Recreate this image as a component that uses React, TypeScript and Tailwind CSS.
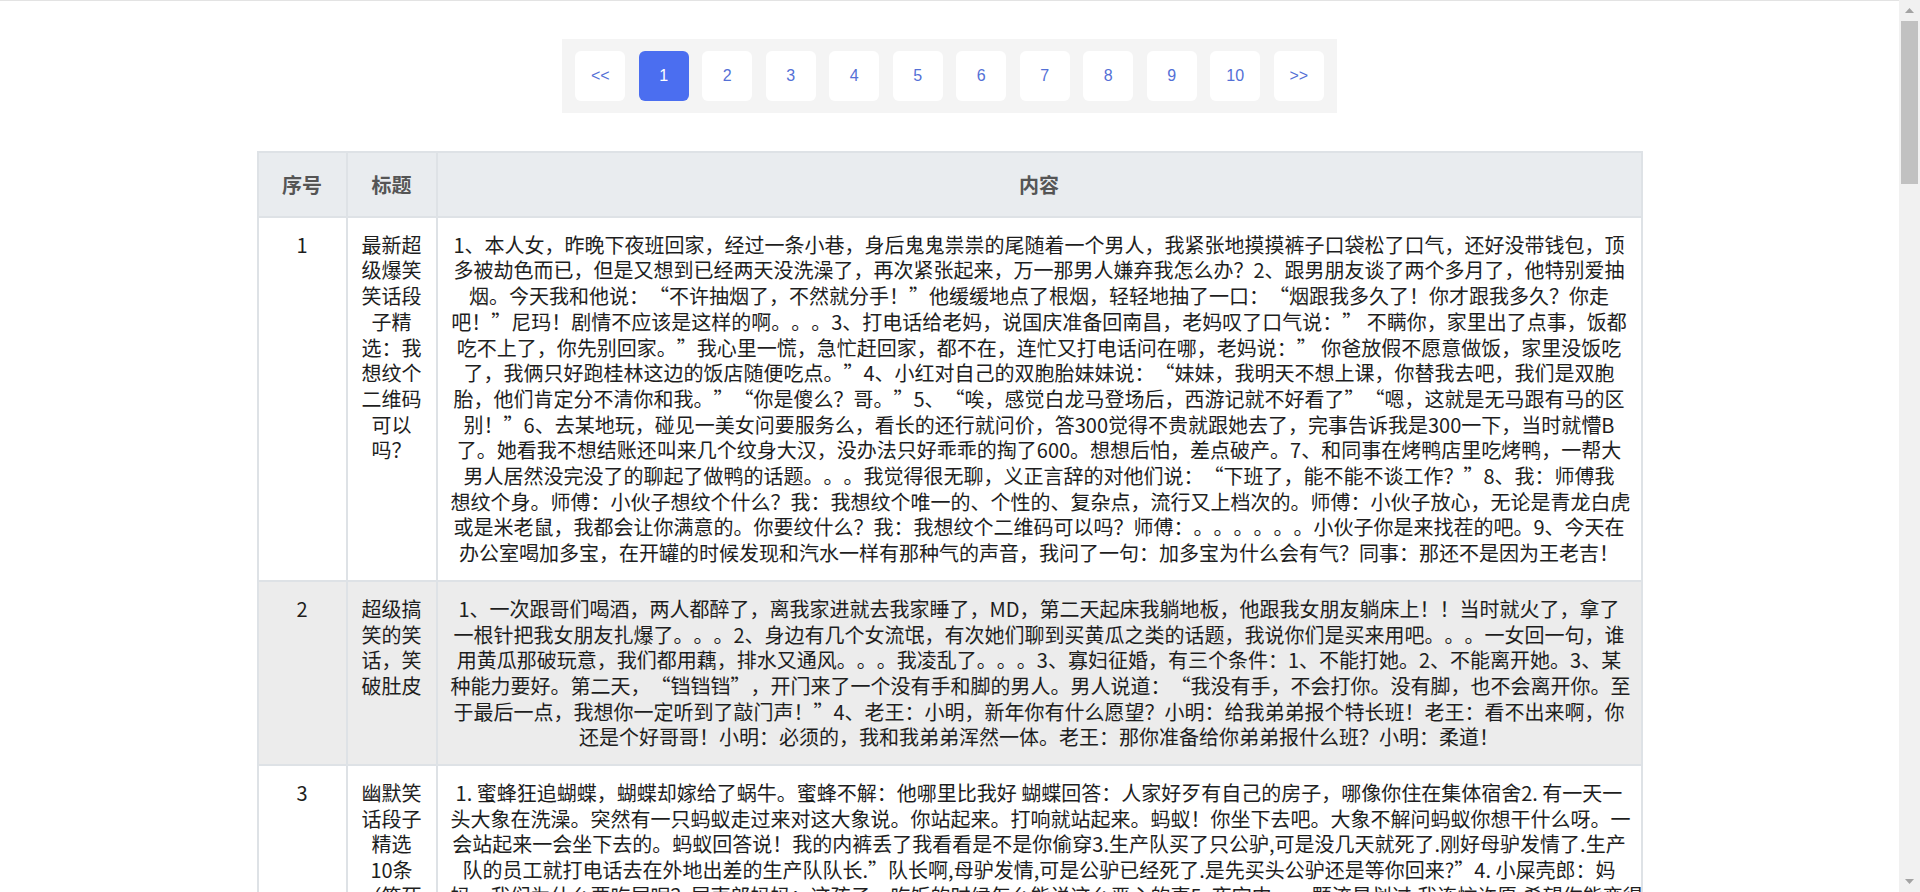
import React from "react";

const pages = ["<<", "1", "2", "3", "4", "5", "6", "7", "8", "9", "10", ">>"];

type Row = { no: string; title: string; lines: string[]; striped?: boolean };

const rows: Row[] = [
  {
    no: "1",
    title: "最新超级爆笑笑话段子精选：我想纹个二维码可以吗？",
    lines: [
      "1、本人女，昨晚下夜班回家，经过一条小巷，身后鬼鬼祟祟的尾随着一个男人，我紧张地摸摸裤子口袋松了口气，还好没带钱包，顶",
      "多被劫色而已，但是又想到已经两天没洗澡了，再次紧张起来，万一那男人嫌弃我怎么办？2、跟男朋友谈了两个多月了，他特别爱抽",
      "烟。今天我和他说：“不许抽烟了，不然就分手！”他缓缓地点了根烟，轻轻地抽了一口：“烟跟我多久了！你才跟我多久？你走",
      "吧！”尼玛！剧情不应该是这样的啊。。。3、打电话给老妈，说国庆准备回南昌，老妈叹了口气说：” 不瞒你，家里出了点事，饭都",
      "吃不上了，你先别回家。”我心里一慌，急忙赶回家，都不在，连忙又打电话问在哪，老妈说：” 你爸放假不愿意做饭，家里没饭吃",
      "了，我俩只好跑桂林这边的饭店随便吃点。”4、小红对自己的双胞胎妹妹说：“妹妹，我明天不想上课，你替我去吧，我们是双胞",
      "胎，他们肯定分不清你和我。”“你是傻么？哥。”5、“唉，感觉白龙马登场后，西游记就不好看了”“嗯，这就是无马跟有马的区",
      "别！”6、去某地玩，碰见一美女问要服务么，看长的还行就问价，答300觉得不贵就跟她去了，完事告诉我是300一下，当时就懵B",
      "了。她看我不想结账还叫来几个纹身大汉，没办法只好乖乖的掏了600。想想后怕，差点破产。7、和同事在烤鸭店里吃烤鸭，一帮大",
      "男人居然没完没了的聊起了做鸭的话题。。。我觉得很无聊，义正言辞的对他们说：“下班了，能不能不谈工作？”8、我：师傅我",
      "想纹个身。师傅：小伙子想纹个什么？我：我想纹个唯一的、个性的、复杂点，流行又上档次的。师傅：小伙子放心，无论是青龙白虎",
      "或是米老鼠，我都会让你满意的。你要纹什么？我：我想纹个二维码可以吗？师傅：。。。。。。小伙子你是来找茬的吧。9、今天在",
      "办公室喝加多宝，在开罐的时候发现和汽水一样有那种气的声音，我问了一句：加多宝为什么会有气？同事：那还不是因为王老吉！",
    ],
  },
  {
    no: "2",
    title: "超级搞笑的笑话，笑破肚皮",
    striped: true,
    lines: [
      "1、一次跟哥们喝酒，两人都醉了，离我家进就去我家睡了，MD，第二天起床我躺地板，他跟我女朋友躺床上！！当时就火了，拿了",
      "一根针把我女朋友扎爆了。。。2、身边有几个女流氓，有次她们聊到买黄瓜之类的话题，我说你们是买来用吧。。。一女回一句，谁",
      "用黄瓜那破玩意，我们都用藕，排水又通风。。。我凌乱了。。。3、寡妇征婚，有三个条件：1、不能打她。2、不能离开她。3、某",
      "种能力要好。第二天，“铛铛铛”，开门来了一个没有手和脚的男人。男人说道：“我没有手，不会打你。没有脚，也不会离开你。至",
      "于最后一点，我想你一定听到了敲门声！”4、老王：小明，新年你有什么愿望？小明：给我弟弟报个特长班！老王：看不出来啊，你",
      "还是个好哥哥！小明：必须的，我和我弟弟浑然一体。老王：那你准备给你弟弟报什么班？小明：柔道！",
    ],
  },
  {
    no: "3",
    title: "幽默笑话段子精选10条（笑死人不偿命）",
    lines: [
      "1. 蜜蜂狂追蝴蝶，蝴蝶却嫁给了蜗牛。蜜蜂不解：他哪里比我好 蝴蝶回答：人家好歹有自己的房子，哪像你住在集体宿舍2. 有一天一",
      "头大象在洗澡。突然有一只蚂蚁走过来对这大象说。你站起来。打响就站起来。蚂蚁！你坐下去吧。大象不解问蚂蚁你想干什么呀。一",
      "会站起来一会坐下去的。蚂蚁回答说！我的内裤丢了我看看是不是你偷穿3.生产队买了只公驴,可是没几天就死了.刚好母驴发情了.生产",
      "队的员工就打电话去在外地出差的生产队队长.”队长啊,母驴发情,可是公驴已经死了.是先买头公驴还是等你回来?”4. 小屎壳郎：妈",
      "妈，我们为什么要吃屎呢？屎壳郎妈妈：这孩子，吃饭的时候怎么能说这么恶心的事5. 夜空中，一颗流星划过,我连忙许愿,希望你能变得",
      "聪明一点，流星听了以后，想了想，又飞回去了。6. 老师：小明，你为什么上课睡觉？小明：因为我昨晚做梦梦见在上课。老师：",
      "那你现在睡觉又梦见什么了？小明：梦见下课了。7. 儿子问爸爸：爸爸，你小时候也挨打吗？爸爸说：是啊，被你爷爷打的。",
    ],
  },
];

export default function App() {
  return (
    <div
      className="flex h-screen w-full overflow-hidden bg-white"
      style={{ fontFamily: '"Noto Sans CJK SC", "Noto Sans", sans-serif' }}
    >
      <main className="min-w-0 flex-1 overflow-hidden border-t border-[#e3e3e3]">
        <nav className="mx-auto mt-[38px] flex w-fit gap-[13.5px] bg-[#f4f4f4] px-[13px] py-[12px]">
          {pages.map((p) => (
            <div
              key={p}
              className={
                p === "1"
                  ? "flex h-[50px] w-[50px] items-center justify-center rounded-[6px] bg-[#4b6ef0] text-[16px] text-white"
                  : "flex h-[50px] w-[50px] items-center justify-center rounded-[6px] bg-white text-[16px] text-[#5470d6]"
              }
              style={{ fontFamily: '"Liberation Sans", Arial, sans-serif' }}
            >
              {p}
            </div>
          ))}
        </nav>

        <table className="mx-auto mt-[38px] w-[1386px] table-fixed border-collapse text-[20px] leading-[25.7px] text-[#1e1e1e] [text-spacing-trim:space-all]">
          <colgroup>
            <col className="w-[89px]" />
            <col className="w-[90px]" />
            <col />
          </colgroup>
          <thead>
            <tr className="bg-[#e9ecef]">
              <th className="border-2 border-[#dee2e6] px-[13px] py-[18.5px] text-center align-middle font-bold text-[#555]">
                序号
              </th>
              <th className="border-2 border-[#dee2e6] px-[13px] py-[18.5px] text-center align-middle font-bold text-[#555]">
                标题
              </th>
              <th className="border-2 border-[#dee2e6] px-[13px] py-[18.5px] text-center align-middle font-bold text-[#555]">
                内容
              </th>
            </tr>
          </thead>
          <tbody>
            {rows.map((r) => (
              <tr key={r.no} className={r.striped ? "bg-[#ececec]" : "bg-white"}>
                <td className="border-2 border-[#dee2e6] px-[13px] py-[14px] text-center align-top">{r.no}</td>
                <td className="border-2 border-[#dee2e6] px-[13px] py-[14px] text-center align-top">{r.title}</td>
                <td className="whitespace-nowrap border-2 border-[#dee2e6] px-[13px] py-[14px] text-center align-top">
                  {r.lines.map((l, i) => (
                    <div key={i}>{l}</div>
                  ))}
                </td>
              </tr>
            ))}
          </tbody>
        </table>
      </main>

      <aside className="flex w-[21px] shrink-0 flex-col bg-[#f1f1f1]">
        <div className="flex h-[21px] items-center justify-center">
          <svg width="9" height="5" viewBox="0 0 9 5">
            <path d="M4.5 0 L9 5 L0 5 Z" fill="#a3a3a3" />
          </svg>
        </div>
        <div className="mx-[2px] h-[163px] bg-[#c1c1c1]" />
        <div className="flex-1" />
        <div className="flex h-[21px] items-center justify-center">
          <svg width="9" height="5" viewBox="0 0 9 5">
            <path d="M0 0 L9 0 L4.5 5 Z" fill="#a3a3a3" />
          </svg>
        </div>
      </aside>
    </div>
  );
}
